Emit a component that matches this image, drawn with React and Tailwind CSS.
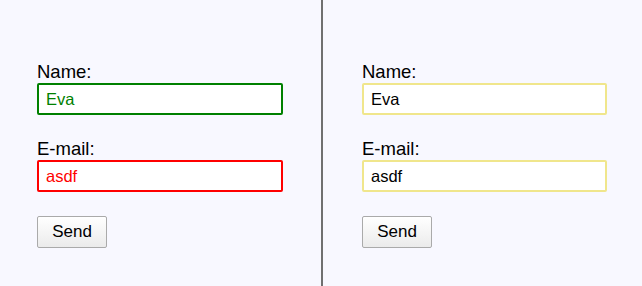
import React from "react";

const Field = ({ label, value, inputClass }) => (
  <div>
    <label className="block h-[20px] text-[18.5px] leading-[20px] text-black">{label}</label>
    <input
      type="text"
      defaultValue={value}
      className={`mt-[1px] block h-[32px] rounded-[2px] border-2 bg-white pl-[7px] text-[16.5px] outline-none ${inputClass}`}
    />
  </div>
);

const SendButton = () => (
  <button className="mt-[24px] block h-[32px] w-[70px] rounded-[2px] border border-[#aaaaaa] bg-gradient-to-b from-white to-[#ebebeb] text-[17px] text-black">
    Send
  </button>
);

export default function App() {
  return (
    <div
      className="flex h-[286px] w-[642px] bg-[#f8f8ff]"
      style={{ fontFamily: '"Liberation Sans", Arial, sans-serif' }}
    >
      <div className="w-[321px] pl-[37px] pt-[62px]">
        <Field label="Name:" value="Eva" inputClass="w-[246px] border-[#008000] text-[#008000]" />
        <div className="mt-[24px]">
          <Field label="E-mail:" value="asdf" inputClass="w-[246px] border-[#ff0000] text-[#ff0000]" />
        </div>
        <SendButton />
      </div>
      <div className="w-[2px] bg-[#707070]" />
      <div className="flex-1 pl-[39px] pt-[62px]">
        <Field label="Name:" value="Eva" inputClass="w-[245px] border-[#f0e68c] text-black" />
        <div className="mt-[24px]">
          <Field label="E-mail:" value="asdf" inputClass="w-[245px] border-[#f0e68c] text-black" />
        </div>
        <SendButton />
      </div>
    </div>
  );
}
